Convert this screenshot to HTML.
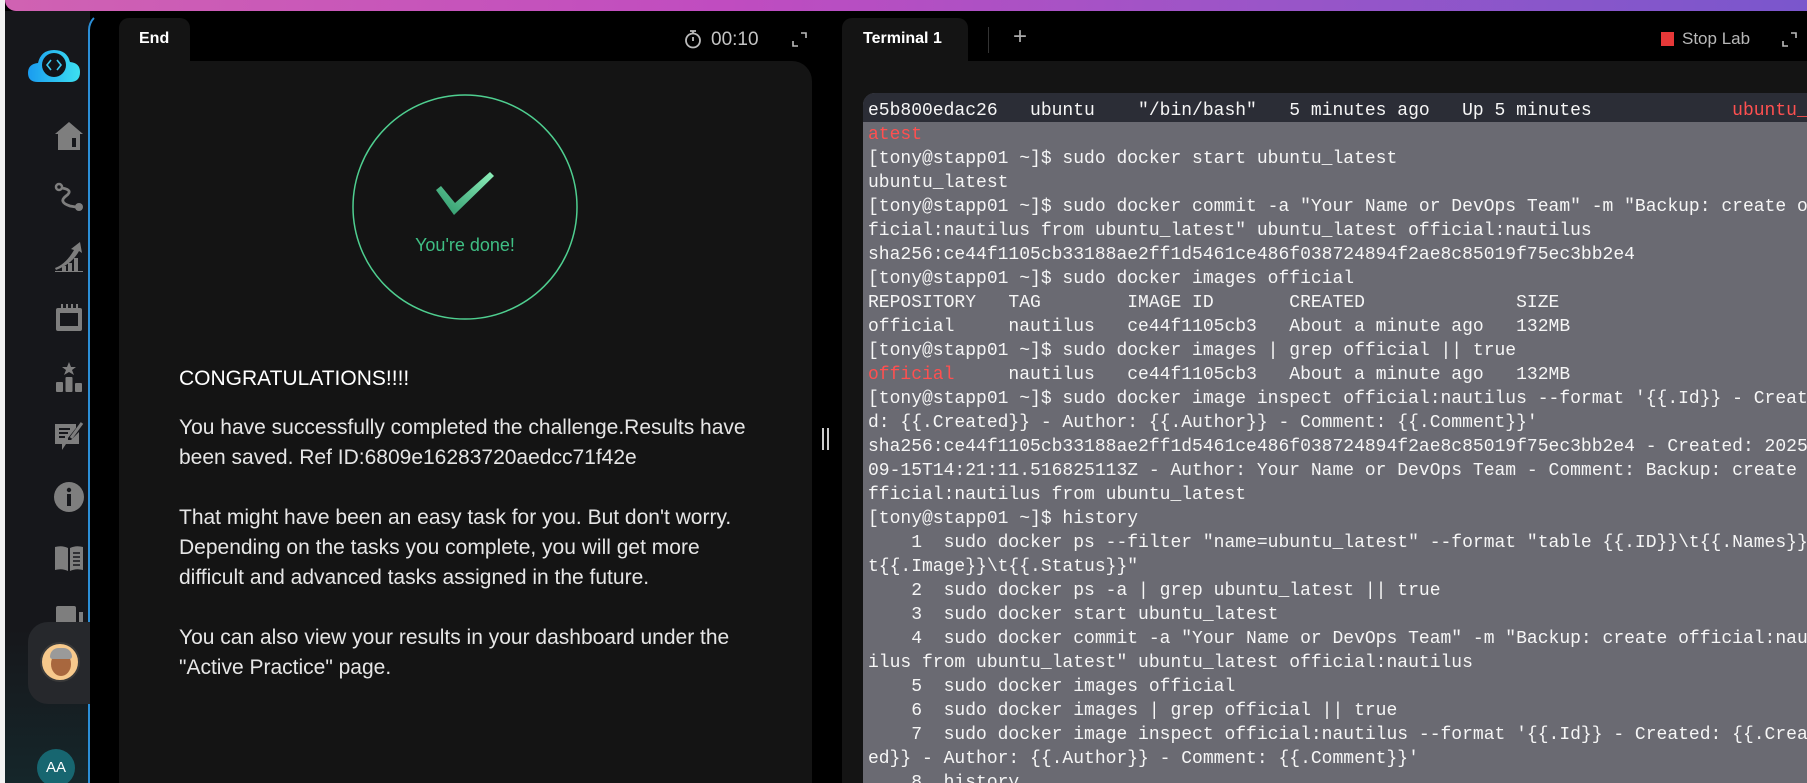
<!DOCTYPE html>
<html><head><meta charset="utf-8"><style>
*{margin:0;padding:0;box-sizing:border-box}
html,body{width:1807px;height:783px;overflow:hidden}
body{background:#000;position:relative;font-family:"Liberation Sans",sans-serif}
.abs{position:absolute}
#strip{left:0;top:0;width:5px;height:783px;background:#f2f2f2}
#grad{left:5px;top:0;width:1802px;height:11px;background:linear-gradient(90deg,#d062b2,#c04cc0 40%,#9a55c8 70%,#7a56cc);border-bottom-left-radius:14px}
#side{left:5px;top:11px;width:85px;height:772px;background:linear-gradient(180deg,#16171b 0%,#16171b 80%,#15262a 100%)}
#blue{left:88px;top:12px;width:40px;height:780px;border-left:2.5px solid #2b8ed6;border-top:2.5px solid transparent;border-top-left-radius:18px}
.ic{position:absolute;left:54px;width:30px;height:30px}
#lefttab{left:119px;top:18px;width:71px;height:50px;background:#141414;border-radius:10px 10px 0 0}
#leftpanel{left:119px;top:61px;width:693px;height:722px;background:#141414;border-radius:0 20px 0 0}
#termtab{left:842px;top:18px;width:126px;height:50px;background:#141414;border-radius:10px 10px 0 0}
#termpanel{left:842px;top:61px;width:965px;height:722px;background:#141414}
#screen{left:863px;top:93px;width:944px;height:690px;background:#6a6a72;border-top-left-radius:12px;overflow:hidden}
#term{font-family:"Liberation Mono",monospace;font-size:18px;line-height:24px;color:#f6f6f6;padding-left:5px}
#term div{height:24px;white-space:pre}
.r{color:#ff5050}
.p{color:#e6e6e6;font-size:21px;line-height:30px;white-space:nowrap}
</style></head><body>
<div class="abs" id="strip"></div>
<div class="abs" id="grad"></div>
<div class="abs" id="side"></div>
<div class="abs" id="blue"></div>

<svg class="abs" style="left:28px;top:48px" width="52" height="36" viewBox="0 0 52 36">
<defs><linearGradient id="lg" x1="0" x2="1"><stop offset="0" stop-color="#1a9cf0"/><stop offset="1" stop-color="#3de0f0"/></linearGradient></defs>
<path d="M10 34 Q0 34 0 25 Q0 16 10 15 Q13 2 26 2 Q39 2 42 14 Q52 15 52 24 Q52 34 42 34 Z" fill="url(#lg)"/>
<circle cx="26" cy="17" r="12" fill="#121317"/>
<path d="M23 12 L19 17 L23 22 M29 12 L33 17 L29 22" stroke="#3cc8f0" stroke-width="1.6" fill="none"/>
</svg>
<svg class="ic" style="top:120px" viewBox="0 0 30 30"><path d="M15 2 L29 14 L26 14 L26 30 L4 30 L4 14 L1 14 Z" fill="#7e7e7e"/><rect x="18" y="18" width="4" height="9" fill="#16171b"/></svg>
<svg class="ic" style="top:182px" viewBox="0 0 30 30"><circle cx="5" cy="5" r="3" fill="none" stroke="#7e7e7e" stroke-width="2.5"/><path d="M8 6 Q20 8 12 14 Q4 20 16 24 L22 25" fill="none" stroke="#7e7e7e" stroke-width="2.8"/><circle cx="25" cy="25" r="4" fill="#7e7e7e"/></svg>
<svg class="ic" style="top:242px" viewBox="0 0 30 30"><path d="M1 26 Q12 22 20 8 L17 7 L26 0 L28 11 L25 9 Q18 22 2 28Z" fill="#7e7e7e"/><rect x="8" y="24" width="4" height="6" fill="#7e7e7e"/><rect x="14" y="21" width="4" height="9" fill="#7e7e7e"/><rect x="20" y="16" width="4" height="14" fill="#7e7e7e"/><rect x="1" y="29" width="28" height="1.5" fill="#7e7e7e"/></svg>
<svg class="ic" style="top:302px" viewBox="0 0 30 30"><rect x="2" y="6" width="26" height="23" rx="2" fill="#7e7e7e"/><rect x="6" y="11" width="18" height="13" fill="#16171b"/><path d="M8 2v6M13 2v6M18 2v6M23 2v6" stroke="#7e7e7e" stroke-width="2"/></svg>
<svg class="ic" style="top:362px" viewBox="0 0 30 30"><path d="M15 0 L17 5 L22 5 L18 8 L20 13 L15 10 L10 13 L12 8 L8 5 L13 5Z" fill="#7e7e7e"/><rect x="2" y="20" width="7" height="10" rx="1" fill="#7e7e7e"/><rect x="11.5" y="15" width="7" height="15" rx="1" fill="#7e7e7e"/><rect x="21" y="21" width="7" height="9" rx="1" fill="#7e7e7e"/></svg>
<svg class="ic" style="top:420px" viewBox="0 0 30 30"><path d="M1 4 H22 L22 8 L14 18 L14 20 L17 20 L25 12 V24 H12 L8 30 L8 24 H1 Z" fill="#7e7e7e"/><path d="M5 9h11M5 13h9M5 17h6" stroke="#16171b" stroke-width="2"/><path d="M17 18 L28 3" stroke="#7e7e7e" stroke-width="3"/></svg>
<svg class="ic" style="top:482px" viewBox="0 0 30 30"><circle cx="15" cy="15" r="15" fill="#7e7e7e"/><circle cx="15" cy="8" r="2.2" fill="#16171b"/><rect x="13" y="12" width="4" height="12" fill="#16171b"/></svg>
<svg class="ic" style="top:543px" viewBox="0 0 30 30"><path d="M1 4 Q8 2 14 5 V28 Q8 25 1 27Z M16 5 Q22 2 29 4 V27 Q22 25 16 28Z" fill="#7e7e7e"/><path d="M19 10h7M19 14h7M19 18h7M19 22h7" stroke="#16171b" stroke-width="1.5"/></svg>
<svg class="ic" style="top:604px" viewBox="0 0 30 30"><rect x="2" y="2" width="20" height="20" rx="2" fill="#7e7e7e"/><rect x="25" y="8" width="4" height="14" fill="#7e7e7e"/></svg>
<div class="abs" style="left:28px;top:622px;width:62px;height:82px;background:#26282c;border-radius:20px 0 0 20px"></div>
<div class="abs" style="left:40px;top:642px;width:40px;height:40px;border-radius:50%;background:#f7c98c;border:2px solid #3a3a3a;overflow:hidden">
<div class="abs" style="left:9px;top:8px;width:20px;height:24px;border-radius:50%;background:#a8673e"></div>
<div class="abs" style="left:8px;top:4px;width:22px;height:11px;border-radius:11px 11px 3px 3px;background:#9a9a9a"></div>
</div>
<div class="abs" style="left:37px;top:749px;width:38px;height:38px;border-radius:50%;background:#176670;color:#fff;font-size:15px;text-align:center;line-height:38px">AA</div>

<div class="abs" id="lefttab"></div>
<div class="abs" id="leftpanel"></div>
<div class="abs" style="left:139px;top:30px;color:#fff;font-weight:bold;font-size:16px">End</div>
<svg class="abs" style="left:684px;top:29px" width="18" height="20" viewBox="0 0 18 20"><circle cx="9" cy="11.5" r="7" fill="none" stroke="#bbb" stroke-width="1.8"/><path d="M6 2h6M9 2v3M9 8v4" stroke="#bbb" stroke-width="1.8"/></svg>
<div class="abs" style="left:711px;top:29px;color:#c4c4c4;font-size:19px">00:10</div>
<svg class="abs" style="left:792px;top:32px" width="15" height="15" viewBox="0 0 15 15"><path d="M9 1h5v5M1 9v5h5" stroke="#bbb" stroke-width="1.6" fill="none"/></svg>

<svg class="abs" style="left:352px;top:94px" width="226" height="226" viewBox="0 0 226 226">
<defs><linearGradient id="ck" x1="0" y1="1" x2="1" y2="0"><stop offset="0" stop-color="#2a9468"/><stop offset="1" stop-color="#8ef0bb"/></linearGradient></defs>
<circle cx="113" cy="113" r="112" fill="none" stroke="#4fcf90" stroke-width="1.5"/>
<path d="M84 96 L89 92 L103 109 L138 78 L142 82 L102 121 Z" fill="url(#ck)"/>
</svg>
<div class="abs" style="left:352px;top:235px;width:226px;text-align:center;color:#3fbf84;font-size:18px">You're done!</div>
<div class="abs" style="left:179px;top:367px;color:#fff;font-size:21px">CONGRATULATIONS!!!!</div>
<div class="abs p" style="left:179px;top:413px">You have successfully completed the challenge.Results have<br>been saved. Ref ID:6809e16283720aedcc71f42e<br><br>That might have been an easy task for you. But don't worry.<br>Depending on the tasks you complete, you will get more<br>difficult and advanced tasks assigned in the future.<br><br>You can also view your results in your dashboard under the<br>"Active Practice" page.</div>
<div class="abs" style="left:822px;top:428px;height:22px;border-left:2px solid #ccc;border-right:2px solid #ccc;width:7px"></div>

<div class="abs" id="termtab"></div>
<div class="abs" id="termpanel"></div>
<div class="abs" style="left:863px;top:30px;color:#fff;font-weight:bold;font-size:16px">Terminal 1</div>
<div class="abs" style="left:988px;top:27px;width:1px;height:26px;background:#333"></div>
<div class="abs" style="left:1013px;top:23px;color:#aaa;font-size:24px;font-weight:300">+</div>
<div class="abs" style="left:1661px;top:32px;width:13px;height:14px;background:#e63838"></div>
<div class="abs" style="left:1682px;top:29px;color:#b8b8b8;font-size:17px">Stop Lab</div>
<svg class="abs" style="left:1782px;top:32px" width="15" height="15" viewBox="0 0 15 15"><path d="M9 1h5v5M1 9v5h5" stroke="#bbb" stroke-width="1.6" fill="none"/></svg>

<div class="abs" id="screen"><div id="term"><div style="background:#2b2d36;margin-left:-5px;padding-left:5px;height:29px;line-height:36px">e5b800edac26   ubuntu    "/bin/bash"   5 minutes ago   Up 5 minutes             <span class="r">ubuntu_l</span></div><div class="r" style="height:25px;line-height:26px">atest</div><div>[tony@stapp01 ~]$ sudo docker start ubuntu_latest</div><div>ubuntu_latest</div><div>[tony@stapp01 ~]$ sudo docker commit -a "Your Name or DevOps Team" -m "Backup: create of</div><div>ficial:nautilus from ubuntu_latest" ubuntu_latest official:nautilus</div><div>sha256:ce44f1105cb33188ae2ff1d5461ce486f038724894f2ae8c85019f75ec3bb2e4</div><div>[tony@stapp01 ~]$ sudo docker images official</div><div>REPOSITORY   TAG        IMAGE ID       CREATED              SIZE</div><div>official     nautilus   ce44f1105cb3   About a minute ago   132MB</div><div>[tony@stapp01 ~]$ sudo docker images | grep official || true</div><div><span class="r">official</span>     nautilus   ce44f1105cb3   About a minute ago   132MB</div><div>[tony@stapp01 ~]$ sudo docker image inspect official:nautilus --format '{{.Id}} - Create</div><div>d: {{.Created}} - Author: {{.Author}} - Comment: {{.Comment}}'</div><div>sha256:ce44f1105cb33188ae2ff1d5461ce486f038724894f2ae8c85019f75ec3bb2e4 - Created: 2025-</div><div>09-15T14:21:11.516825113Z - Author: Your Name or DevOps Team - Comment: Backup: create o</div><div>fficial:nautilus from ubuntu_latest</div><div>[tony@stapp01 ~]$ history</div><div>    1  sudo docker ps --filter "name=ubuntu_latest" --format "table {{.ID}}\t{{.Names}}\</div><div>t{{.Image}}\t{{.Status}}"</div><div>    2  sudo docker ps -a | grep ubuntu_latest || true</div><div>    3  sudo docker start ubuntu_latest</div><div>    4  sudo docker commit -a "Your Name or DevOps Team" -m "Backup: create official:naut</div><div>ilus from ubuntu_latest" ubuntu_latest official:nautilus</div><div>    5  sudo docker images official</div><div>    6  sudo docker images | grep official || true</div><div>    7  sudo docker image inspect official:nautilus --format '{{.Id}} - Created: {{.Creat</div><div>ed}} - Author: {{.Author}} - Comment: {{.Comment}}'</div><div>    8  history</div></div></div>
</body></html>
